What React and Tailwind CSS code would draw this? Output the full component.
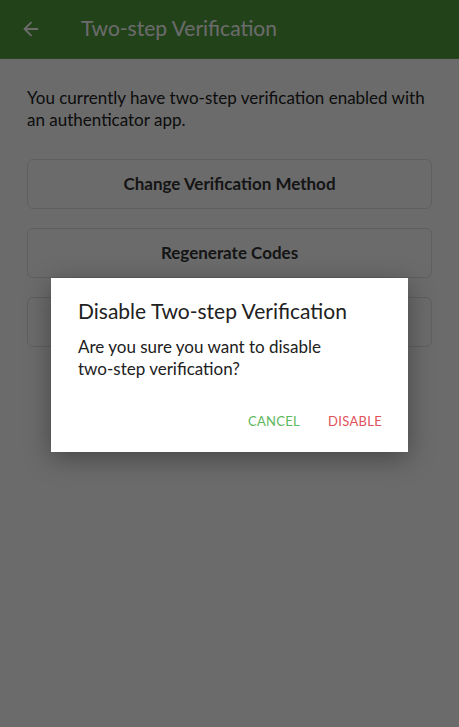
import { ArrowLeft } from "lucide-react";

export default function App() {
  const buttons = ["Change Verification Method", "Regenerate Codes", ""];

  return (
    <div
      className="relative w-full min-h-screen bg-white overflow-hidden"
      style={{ fontFamily: "Lato, 'Noto Sans', sans-serif" }}
    >
      {/* App bar */}
      <div className="h-[59px] bg-[#519d3e] flex items-center border-b border-[#5fa84c]">
        <button className="w-[62px] flex items-center justify-center text-white">
          <ArrowLeft size={22} strokeWidth={2} />
        </button>
        <h1 className="ml-[19px] -mt-[3px] text-[21px] text-white">Two-step Verification</h1>
      </div>

      {/* Content */}
      <div className="px-[27px] pt-[28px]">
        <p className="text-[17px] leading-[22px] text-[#222]">
          You currently have two-step verification enabled with an authenticator app.
        </p>
        <div className="mt-[28px] flex flex-col gap-[19px]">
          {buttons.map((b, i) => (
            <div
              key={i}
              className="h-[50px] rounded-[6px] border border-[#e2e2e2] flex items-center justify-center text-[17px] font-bold text-[#333]"
            >
              {b}
            </div>
          ))}
        </div>
      </div>

      {/* Overlay */}
      <div className="absolute inset-0 bg-black/[0.58]" />

      {/* Dialog */}
      <div className="absolute left-[51px] top-[278px] w-[357px] h-[174px] bg-white shadow-[0_6px_24px_rgba(0,0,0,0.35)] flex flex-col pl-[27px] pr-[26px] pt-[20px]">
        <h2 className="text-[21px] leading-[26px] text-[#212121]">Disable Two-step Verification</h2>
        <p className="mt-[12px] text-[17px] leading-[22px] text-[#212121] pr-[60px]">
          Are you sure you want to disable two-step verification?
        </p>
        <div className="mt-auto mb-[21px] flex justify-end gap-[28px] text-[13px] tracking-[0.3px]">
          <button className="text-[#5cb85c]">CANCEL</button>
          <button className="text-[#e0525a]">DISABLE</button>
        </div>
      </div>
    </div>
  );
}
